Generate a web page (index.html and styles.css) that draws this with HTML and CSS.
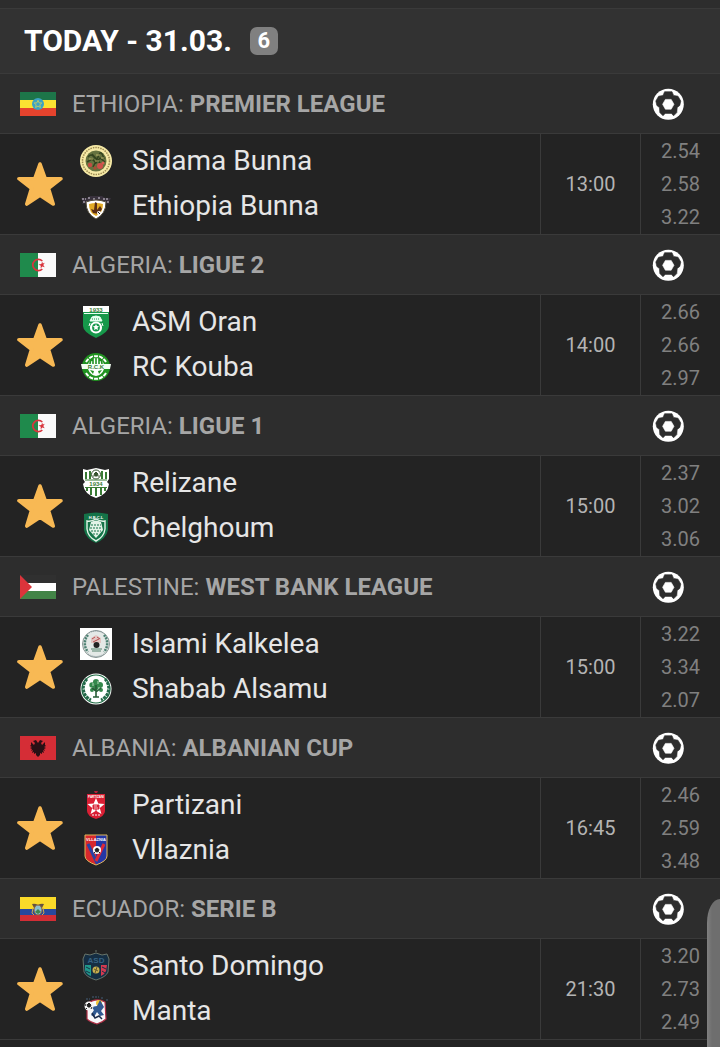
FILE: index.html
```html
<!DOCTYPE html>
<html lang="en">
<head>
<meta charset="utf-8">
<meta name="viewport" content="width=device-width, initial-scale=1">
<title>Today's matches</title>
<link rel="stylesheet" href="styles.css">
</head>
<body>
<svg class="defs" aria-hidden="true">
  <symbol id="star" viewBox="0 0 46 46"><path d="M23 3 28.2 17.5 44 17.7 31.5 27.4 36.2 43 23 34.2 9.8 43 14.5 27.4 2 17.7 17.8 17.5Z" fill="#f8b954" stroke="#f8b954" stroke-width="3.6" stroke-linejoin="round"/></symbol>
  <symbol id="ball" viewBox="0 0 32 32">
    <circle cx="16.300" cy="16.300" r="15.500" fill="#fff"/>
    <path d="M12.600 3.700H20L21.600 7.400 26 8.200 28.800 13 27.800 17.400 25.200 19.600 24.800 24.600 21.600 27.800 19.400 25.400H13.200L11 27.800 7.800 24.600 7.400 19.600 4.800 17.400 3.800 13 6.600 8.200 11 7.400Z" fill="#2d2d2d" stroke="#2d2d2d" stroke-width=".6" stroke-linejoin="round"/>
    <path d="M13.400 11.400H19.200L22 16.300 19.200 21.200H13.400L10.600 16.300Z" fill="#fff" stroke="#fff" stroke-width=".6"/>
  </symbol>
  <symbol id="algeria" viewBox="0 0 36 24">
    <path fill="#1f8a4c" d="M0 0h18v24H0z"/><path fill="#fafafa" d="M18 0h18v24H18z"/>
    <path d="M22.300 8A5.600 5.600 0 1 0 22.300 16" fill="none" stroke="#d8343c" stroke-width="1.700"/>
    <path d="M22.200 8.500 21.300 11 18.500 11.600 20.800 12.800 20.600 15.500 22.300 13.500 24.700 14.300 23.300 12 24.800 9.800 22.800 10.600Z" fill="#d8343c"/>
  </symbol>
</svg>
<main class="fixtures">
  <header class="day"><h1 class="day-title">TODAY - 31.03.</h1><span class="count">6</span></header>

  <section>
    <h2 class="league">
      <svg class="flag" viewBox="0 0 36 24" aria-hidden="true"><path fill="#1d7549" d="M0 0h36v8H0z"/><path fill="#fbe232" d="M0 8h36v8H0z"/><path fill="#e5432d" d="M0 16h36v8H0z"/><circle cx="18" cy="12" r="6" fill="#3ca2c4"/><path d="m18 8.300 1.100 2.500 2.700.2-2 1.800.6 2.700-2.400-1.400-2.400 1.400.6-2.700-2-1.800 2.700-.2z" fill="none" stroke="#c5cf62" stroke-width=".9"/></svg>
      <span class="league-name">ETHIOPIA: <b>PREMIER LEAGUE</b></span><svg class="ball" role="img" aria-label="Football"><use href="#ball"/></svg>
    </h2>
    <article class="match">
      <button class="favorite" aria-label="Favorite"><svg class="star"><use href="#star"/></svg></button>
      <div class="teams">
        <div class="team"><svg class="crest" viewBox="0 0 32 32" aria-hidden="true"><circle cx="16" cy="16" r="16" fill="#f6eaa6"/><circle cx="16" cy="16" r="13.500" fill="none" stroke="#9c8a52" stroke-width="1.500" stroke-dasharray="1.500 1"/><circle cx="16" cy="16" r="10.500" fill="#65723f"/><path d="M8 12q3-4 6 0t5-2 5 4M7 17l5-3 4 4 4-5 5 4M12 9l8 9M20 8l-7 14" fill="none" stroke="#33431f" stroke-width="1.500"/><path d="M9 14h4m3-4h4m-5 6h4m2-3h3" stroke="#b7b16b"/><circle cx="10" cy="20" r="2.200" fill="#c44b43"/><circle cx="20" cy="21" r="3" fill="#cf4f49"/><circle cx="15" cy="23" r="1.700" fill="#aa4d38"/><circle cx="23" cy="18" r="1.500" fill="#d65a51"/></svg><span>Sidama Bunna</span></div>
        <div class="team"><svg class="crest" viewBox="0 0 32 32" aria-hidden="true"><path d="M1 8h6l3-2h12l3 2h6l-2 4 1 2-5-1H7l-5 1 1-2z" fill="#38313c"/><path d="M2 9h4m2-1h3m2 1h3m2-1h3m2 1h6M3 12h4m17 0h5" stroke="#d9d3df" stroke-dasharray="2 1"/><path d="M6 12q10-4 20 0 0 12-10 17Q6 24 6 12Z" fill="#fff" stroke="#554d3b"/><path d="M9 14q7-2 14 0 0 9-7 12-7-3-7-12Z" fill="#e2aa25"/><path d="m11 19 3 1 1-8 2 1v7l3-4 2 3-3 5-6-1z" fill="#5b2e14"/><circle cx="19" cy="23" r="2" fill="#fff"/><path d="m18 22 2 2" stroke="#222"/></svg><span>Ethiopia Bunna</span></div>
      </div>
      <time class="time">13:00</time><div class="odds"><span>2.54</span><span>2.58</span><span>3.22</span></div>
    </article>
  </section>

  <section>
    <h2 class="league"><svg class="flag" aria-hidden="true"><use href="#algeria"/></svg><span class="league-name">ALGERIA: <b>LIGUE 2</b></span><svg class="ball" role="img" aria-label="Football"><use href="#ball"/></svg></h2>
    <article class="match">
      <button class="favorite" aria-label="Favorite"><svg class="star"><use href="#star"/></svg></button>
      <div class="teams">
        <div class="team"><svg class="crest" viewBox="0 0 32 32" aria-hidden="true"><path d="M3 0h26v20q0 6-13 12Q3 26 3 20Z" fill="#16984a"/><path d="M3 0h26v6H3z" fill="#fff"/><text x="16" y="5.500" text-anchor="middle" class="mark mark-green">1933</text><path d="M4 7.500h24" stroke="#e8fff0"/><path d="M12 11q4-2 8 0l2 4H10z" fill="#e8fff0" stroke="#e8fff0"/><path d="M12 13h8" stroke="#16984a" stroke-dasharray="1 1"/><circle cx="16" cy="21.500" r="5" fill="#16984a" stroke="#fff" stroke-width="2.200"/><path d="m16 18 1 2 2 .2-1.500 1.500.5 2.300-2-1-2 1 .5-2.300-1.500-1.500 2-.2Z" fill="#fff"/><path d="m10 17-1 3m13-3 1 3" stroke="#fff"/></svg><span>ASM Oran</span></div>
        <div class="team"><svg class="crest" viewBox="0 0 32 32" aria-hidden="true"><circle cx="16" cy="16" r="14" fill="#219321"/><path d="M6 11A11.500 11.500 0 0 1 26 11M6 22a11.500 11.500 0 0 0 20 0" fill="none" stroke="#fff" stroke-width="2" stroke-dasharray="4 1"/><path d="M8 15a8 8 0 0 1 16 0v3q-2 6-8 7-6-1-8-7z" fill="#fff"/><path d="M10 13q0-4 3-6l0 6m3 0V7m3 0v6m3 0q0-4-3-6" fill="none" stroke="#219321" stroke-width="1.600"/><path d="M1 13h30l-1 5H2z" fill="#f3fff3"/><text x="16" y="18" text-anchor="middle" class="mark mark-green">R.C.K</text><path d="m10 19 4 1-1 3zM22 19l-4 1 1 3z" fill="#219321"/></svg><span>RC Kouba</span></div>
      </div>
      <time class="time">14:00</time><div class="odds"><span>2.66</span><span>2.66</span><span>2.97</span></div>
    </article>
  </section>

  <section>
    <h2 class="league"><svg class="flag" aria-hidden="true"><use href="#algeria"/></svg><span class="league-name">ALGERIA: <b>LIGUE 1</b></span><svg class="ball" role="img" aria-label="Football"><use href="#ball"/></svg></h2>
    <article class="match">
      <button class="favorite" aria-label="Favorite"><svg class="star"><use href="#star"/></svg></button>
      <div class="teams">
        <div class="team"><svg class="crest" viewBox="0 0 32 32" aria-hidden="true"><path d="m3 2 4 1 9-2 9 2 4-1v10l-2 3 2 2q-1 10-13 14Q4 27 3 17l2-2-2-3Z" fill="#fff"/><path d="M6 5v7m4-8v8M22 4v8m4-7v7M7 21v3m4-3v7m5-7v8m5-8v7m4-7v3" stroke="#397b35" stroke-width="2"/><path d="M5 13h22M5 20.500h22" stroke="#397b35"/><text x="16" y="19" text-anchor="middle" class="mark mark-green">1934</text><circle cx="16" cy="7.500" r="4.500" fill="#fff" stroke="#36532f"/><path d="m16 5 2 2-1 2h-2l-1-2zM12.500 9l2 0m5 0-2 0" fill="#36532f" stroke="#36532f"/></svg><span>Relizane</span></div>
        <div class="team"><svg class="crest" viewBox="0 0 32 32" aria-hidden="true"><path d="M4 2q12-3 24 0v16q-2 9-12 13Q6 27 4 18Z" fill="#147348"/><text x="16" y="6.500" text-anchor="middle" class="mark mark-white">H.B.C.L</text><path d="M7 9q4 1 9-2 5 3 9 2v8q-1 8-9 12-8-4-9-12Z" fill="none" stroke="#e3f3e8" stroke-width="1.400"/><path d="M11 10q5-3 10 0l2 8-7 8-7-8Z" fill="#e3f3e8"/><path d="M11 13h10M10 16h12M11 19h10M13 22h6" stroke="#147348" stroke-width="1.200" stroke-dasharray="2 1"/></svg><span>Chelghoum</span></div>
      </div>
      <time class="time">15:00</time><div class="odds"><span>2.37</span><span>3.02</span><span>3.06</span></div>
    </article>
  </section>

  <section>
    <h2 class="league"><svg class="flag" viewBox="0 0 36 24" aria-hidden="true"><path fill="#303030" d="M0 0h36v8H0z"/><path fill="#fff" d="M0 8h36v8H0z"/><path fill="#438447" d="M0 16h36v8H0z"/><path fill="#db343b" d="m0 0 12 12L0 24z"/></svg><span class="league-name">PALESTINE: <b>WEST BANK LEAGUE</b></span><svg class="ball" role="img" aria-label="Football"><use href="#ball"/></svg></h2>
    <article class="match">
      <button class="favorite" aria-label="Favorite"><svg class="star"><use href="#star"/></svg></button>
      <div class="teams">
        <div class="team"><svg class="crest" viewBox="0 0 32 32" aria-hidden="true"><path fill="#fff" d="M0 0h32v32H0z"/><circle cx="16" cy="16" r="13.500" fill="#e4e9e7" stroke="#899694"/><path d="M8 7a13 13 0 0 0 0 17M24 7a13 13 0 0 1 0 17" fill="none" stroke="#4d8173" stroke-width="2.500" stroke-dasharray="2 1"/><path d="M8 26q8 5 16 0M9 5q7-4 14 0" fill="none" stroke="#829199" stroke-dasharray="1 1"/><path d="m11 10 5-3 5 3v5H11z" fill="#e2c5c2"/><path d="m12 11 3-2m2 0 3 2m-7 3 6-3" stroke="#b74f50"/><circle cx="16.500" cy="17" r="3" fill="#222"/><path d="M11 21h11M12 23h9" stroke="#54826d"/></svg><span>Islami Kalkelea</span></div>
        <div class="team"><svg class="crest" viewBox="0 0 32 32" aria-hidden="true"><circle cx="16" cy="16" r="15.500" fill="#fff"/><circle cx="16" cy="16" r="14" fill="none" stroke="#19683f" stroke-width="1.200"/><path d="M7 6a13 13 0 0 0 4 21M25 6a13 13 0 0 1-4 21" fill="none" stroke="#236849" stroke-width="3" stroke-dasharray="3 .8"/><circle cx="16" cy="9" r="3" fill="#34884c"/><circle cx="12" cy="12" r="2.700" fill="#34884c"/><circle cx="20" cy="12" r="3" fill="#34884c"/><circle cx="12" cy="17" r="2" fill="#34884c"/><circle cx="21" cy="17" r="2" fill="#34884c"/><circle cx="16" cy="14" r="3" fill="#34884c"/><path d="M13 10v3m5-5v3m1 3v2m-5 0v2" stroke="#b9dabd"/><path d="M16 12v12m0-6-4-3m4 4 5-4m-8 9h6" stroke="#265c36" stroke-width="1.600"/></svg><span>Shabab Alsamu</span></div>
      </div>
      <time class="time">15:00</time><div class="odds"><span>3.22</span><span>3.34</span><span>2.07</span></div>
    </article>
  </section>

  <section>
    <h2 class="league"><svg class="flag" viewBox="0 0 36 24" aria-hidden="true"><path fill="#d52d36" d="M0 0h36v24H0z"/><path d="m16 4-3 1 2 2-1 2-3-3 0 3-1 1 2 1-2 1 2 1-1 2 2-1-1 3 2-1 0 2 2-1 0 2 2 2 2-2 0-2 2 1 0-2 2 1-1-3 2 1-1-2 2-1-2-1 2-1-1-1 0-3-3 3-1-2 2-2-3-1-2 3Z" fill="#291015"/></svg><span class="league-name">ALBANIA: <b>ALBANIAN CUP</b></span><svg class="ball" role="img" aria-label="Football"><use href="#ball"/></svg></h2>
    <article class="match">
      <button class="favorite" aria-label="Favorite"><svg class="star"><use href="#star"/></svg></button>
      <div class="teams">
        <div class="team"><svg class="crest" viewBox="0 0 32 32" aria-hidden="true"><path d="M14 2h4l-1 2h-2z" fill="#b51d35"/><path d="M7 5h18v17q0 5-9 8-9-3-9-8Z" fill="#d91f34"/><text x="16" y="9" text-anchor="middle" class="mark mark-small">PARTIZANI</text><path d="m16 9 2.300 5.500 6.200.4-4.700 4 1.600 6-5.400-3.200-5.400 3.200 1.600-6-4.700-4 6.200-.4z" fill="#fff"/><path d="M13 16h6v4h-6zM16 20v3" fill="#d91f34" stroke="#d91f34"/><path d="M14 17h3m-3 2h4" stroke="#fff" stroke-width=".7"/><path d="M12 26h8" stroke="#fff" stroke-dasharray="2 1"/></svg><span>Partizani</span></div>
        <div class="team"><svg class="crest" viewBox="0 0 32 32" aria-hidden="true"><path d="M5 1h22v21q0 5-11 9Q5 27 5 22Z" fill="#d7282d"/><path d="M16 1h11v21q0 5-11 9Z" fill="#2437a6"/><text x="16" y="7" text-anchor="middle" class="mark mark-white">VLLAZNIA</text><path d="m8 10 8 17 8-17" fill="none" stroke="#2842a5" stroke-width="3"/><path d="m16 27 8-17" stroke="#df2837" stroke-width="3"/><path d="M5 1h22v21q0 5-11 9Q5 27 5 22Z" fill="none" stroke="#dfb85b"/><circle cx="17" cy="16" r="4" fill="#fff"/><path d="m17 14 2 1.500-.8 2.300h-2.400l-.8-2.300Zm-3 4 1 1m4 0 1-1" fill="#222" stroke="#222"/></svg><span>Vllaznia</span></div>
      </div>
      <time class="time">16:45</time><div class="odds"><span>2.46</span><span>2.59</span><span>3.48</span></div>
    </article>
  </section>

  <section>
    <h2 class="league"><svg class="flag" viewBox="0 0 36 24" aria-hidden="true"><path fill="#fada29" d="M0 0h36v12H0z"/><path fill="#29489d" d="M0 12h36v6H0z"/><path fill="#d32d35" d="M0 18h36v6H0z"/><path d="M12 7q3-1 6 1 3-2 6-1l-2 4h-8Z" fill="#66523f"/><ellipse cx="18" cy="13" rx="4" ry="5" fill="#8cbfd0" stroke="#8d6338"/><path d="m15 15 3-3 3 3-3 2z" fill="#3f844e"/><path d="m13 11-1 5 2 2m9-7 1 5-2 2" fill="none" stroke="#d2a64a"/></svg><span class="league-name">ECUADOR: <b>SERIE B</b></span><svg class="ball" role="img" aria-label="Football"><use href="#ball"/></svg></h2>
    <article class="match">
      <button class="favorite" aria-label="Favorite"><svg class="star"><use href="#star"/></svg></button>
      <div class="teams">
        <div class="team"><svg class="crest" viewBox="0 0 32 32" aria-hidden="true"><path d="m5 4 5 1 6-2 6 2 5-1 2 5-1 13q-2 5-12 8Q6 27 4 22L3 9Z" fill="#152e43" stroke="#67746a"/><text x="16" y="12.500" text-anchor="middle" class="mark mark-blue">ASD</text><path d="M5 15h6v11q-5-2-6-6z" fill="#20998c"/><path d="M21 15h6l-1 6q-1 3-5 5z" fill="#d43a50"/><path d="m6 17 4 2m-4 2 4 2m12-6 4 2m-4 2 3 2" stroke="#183044"/><circle cx="16" cy="20" r="3.500" fill="#c7af4e"/><path d="m14 19 4 2m-1-4-2 6" stroke="#675b2f"/><path d="M15 1h2" stroke="#67746a"/></svg><span>Santo Domingo</span></div>
        <div class="team"><svg class="crest" viewBox="0 0 32 32" aria-hidden="true"><path d="M6 4h4m2-2h7m2 1h3m2 2h2" stroke="#445f79" stroke-dasharray="2 1"/><path d="M7 9q9-7 18-2l1 17q-3 3-9 5-7-2-10-5Z" fill="#f8f8fa" stroke="#b02f45" stroke-width="1.200"/><circle cx="19" cy="8" r="3" fill="#f1c537"/><path d="m20 5 4 7-3 4 3 4-4 1-3-4-3 5-3-2 3-5-3-3 6-1z" fill="#315991"/><path d="m12 18 3 5 4-2 3 3" fill="none" stroke="#1d2d4c" stroke-width="1.500"/><circle cx="9" cy="11" r="4.500" fill="#f4f4f4"/><path d="m9 8 2 2-1 2H8l-1-2Zm-4 3 1-2m5 5 1-2m-6 1 1 1" fill="#222" stroke="#222"/></svg><span>Manta</span></div>
      </div>
      <time class="time">21:30</time><div class="odds"><span>3.20</span><span>2.73</span><span>2.49</span></div>
    </article>
  </section>
  <div class="drawer-edge" aria-hidden="true"></div>
</main>
</body>
</html>
```
FILE: styles.css
```css
* { box-sizing: border-box; }
body { margin: 0; background: #232323; color: #e6e6e6; font-family: Roboto, "Noto Sans", sans-serif; }
.defs { position: absolute; width: 0; height: 0; }
.fixtures { position: relative; border-top: 8px solid #2d2d2d; padding-bottom: 7px; }
.day { display: flex; align-items: center; gap: 18px; padding: 0 24px; min-height: 66px; background: #323232; border-top: 1px solid #3a3a3a; border-bottom: 1px solid #3a3a3a; }
.day-title { margin: 0; font-size: 30px; line-height: 40px; font-weight: 700; color: #fff; }
.count { min-width: 28px; padding: 0 7px; border-radius: 7px; background: #808080; color: #fff; font-size: 22px; line-height: 28px; font-weight: 700; text-align: center; }
.league { display: flex; align-items: center; gap: 16px; margin: 0; padding: 0 36px 0 20px; min-height: 60px; background: #2d2d2d; border-bottom: 1px solid #3a3a3a; color: #a6a6a6; font-size: 24px; line-height: 32px; font-weight: 400; }
.league b { font-weight: 700; }
.league-name { flex: 1; }
.flag { width: 36px; height: 24px; }
.ball { width: 32px; height: 32px; }
.match { display: grid; grid-template-columns: 80px 1fr 100px 80px; min-height: 101px; border-bottom: 1px solid #3a3a3a; }
.favorite { display: grid; place-items: center; padding: 0; border: 0; background: none; cursor: pointer; }
.star { width: 46px; height: 46px; }
.teams { display: grid; grid-template-rows: 1fr 1fr; padding: 4px 0 6px; }
.team { display: flex; align-items: center; gap: 20px; font-size: 28px; line-height: 40px; }
.crest { width: 32px; height: 32px; }
.time, .odds { border-left: 1px solid #3a3a3a; font-size: 20px; line-height: 24px; }
.time { display: grid; place-items: center; color: #b4b4b4; }
.odds { display: grid; grid-template-rows: repeat(3, 1fr); place-items: center; color: #808080; }
.mark { font-family: "Liberation Sans", sans-serif; font-weight: 700; }
.mark-green { font-size: 6px; fill: #397b35; }
.mark-white { font-size: 4px; fill: #fff; }
.mark-small { font-size: 3px; fill: #fff; }
.mark-blue { font-size: 8px; fill: #376382; }
.drawer-edge { position: absolute; right: 0; bottom: 0; width: 13px; height: 148px; border-radius: 13px 0 0 0 / 24px 0 0 0; background: linear-gradient(90deg, #808080, #6e6e6e 5px); }
```
